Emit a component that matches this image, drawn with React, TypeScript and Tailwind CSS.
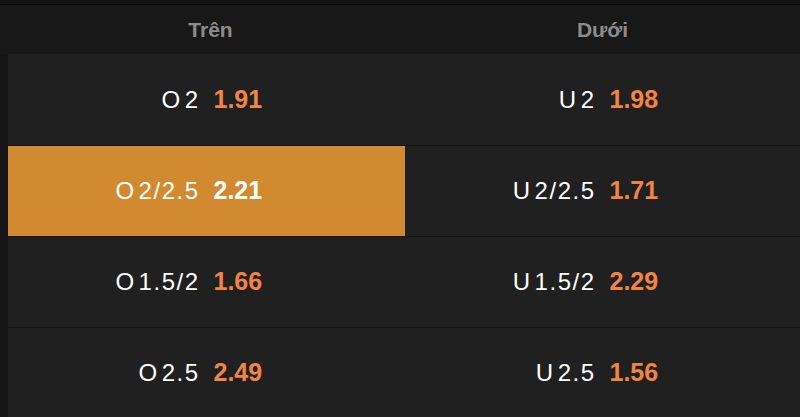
import React from "react";

type Cell = { label: string; odds: string; active?: boolean };
const rows: [Cell, Cell][] = [
  [{ label: "O2", odds: "1.91" }, { label: "U2", odds: "1.98" }],
  [{ label: "O2/2.5", odds: "2.21", active: true }, { label: "U2/2.5", odds: "1.71" }],
  [{ label: "O1.5/2", odds: "1.66" }, { label: "U1.5/2", odds: "2.29" }],
  [{ label: "O2.5", odds: "2.49" }, { label: "U2.5", odds: "1.56" }],
];

function OddsCell({ c, className }: { c: Cell; className: string }) {
  return (
    <div
      className={
        "flex h-full items-center " +
        className +
        (c.active ? " bg-[#d28a30]" : " bg-[#202020]")
      }
    >
      <div className="flex-1 pr-[7px] text-right text-[24px] tracking-[1.5px] text-white">
        <span className="mr-[3px]">{c.label.charAt(0)}</span>
        {c.label.slice(1)}
      </div>
      <div
        className={
          "flex-1 pl-[7px] text-left text-[25px] font-bold " +
          (c.active ? "text-white" : "text-[#f28446]")
        }
      >
        {c.odds}
      </div>
    </div>
  );
}

export default function App() {
  return (
    <div
      className="h-[417px] w-[800px] overflow-hidden bg-[#181818]"
      style={{ fontFamily: '"Liberation Sans", Arial, sans-serif' }}
    >
      <div className="h-[5px] border-b border-[#0a0a0a] bg-[#131313]" />
      <div className="flex h-[49px] items-center bg-[#181818]">
        <div className="w-[405px] pl-4 text-center text-[21px] font-bold text-[#8c8c8c]">
          Trên
        </div>
        <div className="flex-1 text-center text-[21px] font-bold text-[#8c8c8c]">
          Dưới
        </div>
      </div>
      <div className="flex">
        <div className="w-[8px] bg-[#151515]" />
        <div className="flex flex-1 flex-col">
          {rows.map((r, i) => (
            <div
              key={i}
              className={
                "flex h-[91px] " + (i > 0 ? "border-t border-[#141414]" : "")
              }
            >
              <OddsCell c={r[0]} className="w-[397px]" />
              <OddsCell c={r[1]} className="flex-1" />
            </div>
          ))}
        </div>
      </div>
    </div>
  );
}
